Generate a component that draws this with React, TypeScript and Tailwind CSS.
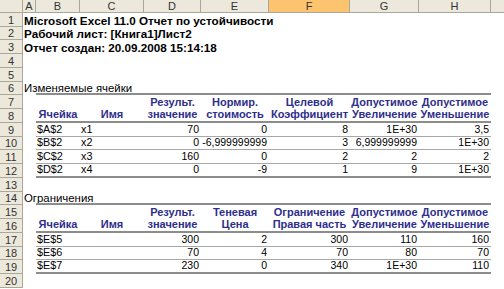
import React from "react";

const W = { rh: 23, A: 13, B: 44, C: 64, D: 57, E: 68, F: 81, G: 69, H: 72 };
const heights = [14, 13, 14, 14, 14, 13, 14, 14, 14, 13, 14, 14, 14, 13, 14, 14, 14, 13, 14, 14];

type Row = {
  a?: string;
  aBold?: boolean;
  b?: string;
  c?: string;
  nums?: string[];
  hdr?: string[];
  border?: "thick" | "thin";
};

const rows: Row[] = [
  { a: "Microsoft Excel 11.0 Отчет по устойчивости", aBold: true },
  { a: "Рабочий лист: [Книга1]Лист2", aBold: true },
  { a: "Отчет создан: 20.09.2008 15:14:18", aBold: true },
  {},
  {},
  { a: "Изменяемые ячейки", border: "thick" },
  { hdr: ["", "", "Результ.", "Нормир.", "Целевой", "Допустимое", "Допустимое"] },
  { hdr: ["Ячейка", "Имя", "значение", "стоимость", "Коэффициент", "Увеличение", "Уменьшение"], border: "thick" },
  { b: "$A$2", c: "x1", nums: ["70", "0", "8", "1E+30", "3,5"], border: "thin" },
  { b: "$B$2", c: "x2", nums: ["0", "-6,999999999", "3", "6,999999999", "1E+30"], border: "thin" },
  { b: "$C$2", c: "x3", nums: ["160", "0", "2", "2", "2"], border: "thin" },
  { b: "$D$2", c: "x4", nums: ["0", "-9", "1", "9", "1E+30"], border: "thick" },
  {},
  { a: "Ограничения", border: "thick" },
  { hdr: ["", "", "Результ.", "Теневая", "Ограничение", "Допустимое", "Допустимое"] },
  { hdr: ["Ячейка", "Имя", "значение", "Цена", "Правая часть", "Увеличение", "Уменьшение"], border: "thick" },
  { b: "$E$5", c: "", nums: ["300", "2", "300", "110", "160"], border: "thin" },
  { b: "$E$6", c: "", nums: ["70", "4", "70", "80", "70"], border: "thin" },
  { b: "$E$7", c: "", nums: ["230", "0", "340", "1E+30", "110"], border: "thick" },
  {},
];

const cols = ["D", "E", "F", "G", "H"] as const;

export default function App() {
  return (
    <div
      className="w-[504px] h-[289px] overflow-hidden bg-white text-[11px] text-black"
      style={{ fontFamily: '"Liberation Sans", Arial, sans-serif' }}
    >
      {/* column headers */}
      <div className="flex h-[13px] text-[#333]">
        <div className="w-[23px] shrink-0 h-full bg-[#ECE9DC] border-r border-b border-[#ACA899]" />
        {(["A", "B", "C", "D", "E", "F", "G", "H"] as const).map((c) => (
          <div
            key={c}
            style={{ width: W[c] }}
            className={`shrink-0 h-full flex items-center justify-center leading-[12px] border-r border-b border-[#ACA899] ${
              c === "F" ? "bg-[#FCC46F]" : "bg-[#ECE9DC]"
            }`}
          >
            {c}
          </div>
        ))}
        <div className="flex-1 h-full bg-[#ECE9DC] border-b border-[#ACA899]" />
      </div>
      {rows.map((r, i) => {
        const h = heights[i];
        const borderCls =
          r.border === "thick"
            ? "border-b-2 border-[#8C8C8C]"
            : r.border === "thin"
            ? "border-b border-[#A8A8A8]"
            : "";
        return (
          <div key={i} className="flex" style={{ height: h }}>
            <div className="w-[23px] shrink-0 h-full bg-[#ECE9DC] border-r border-b border-[#ACA899] flex items-center justify-center text-[#333] leading-[12px]">
              {i + 1}
            </div>
            <div className="w-[13px] shrink-0 h-full flex items-end">
              {r.a && (
                <span
                  className={`whitespace-nowrap pl-[1px] leading-[13px] ${
                    r.aBold ? "font-bold text-[11.7px]" : "text-[11.4px]"
                  }`}
                >
                  {r.a}
                </span>
              )}
            </div>
            <div className={`flex h-full w-[455px] shrink-0 ${borderCls}`}>
              {r.hdr ? (
                r.hdr.map((t, j) => {
                  const key = (["B", "C", "D", "E", "F", "G", "H"] as const)[j];
                  return (
                    <div
                      key={j}
                      style={{ width: W[key] }}
                      className="shrink-0 flex items-end justify-center font-bold text-[#2E2E8C] whitespace-nowrap leading-[13px]"
                    >
                      {t}
                    </div>
                  );
                })
              ) : r.b !== undefined ? (
                <>
                  <div style={{ width: W.B }} className="shrink-0 flex items-end pl-[1px] leading-[13px] text-[10.8px]">
                    {r.b}
                  </div>
                  <div style={{ width: W.C }} className="shrink-0 flex items-end pl-[1px] leading-[13px] text-[10.8px]">
                    {r.c}
                  </div>
                  {r.nums!.map((n, j) => (
                    <div
                      key={j}
                      style={{ width: W[cols[j]] }}
                      className="shrink-0 flex items-end justify-end pr-[2px] leading-[13px] whitespace-nowrap text-[10.5px]"
                    >
                      {n}
                    </div>
                  ))}
                </>
              ) : null}
            </div>
          </div>
        );
      })}
    </div>
  );
}
